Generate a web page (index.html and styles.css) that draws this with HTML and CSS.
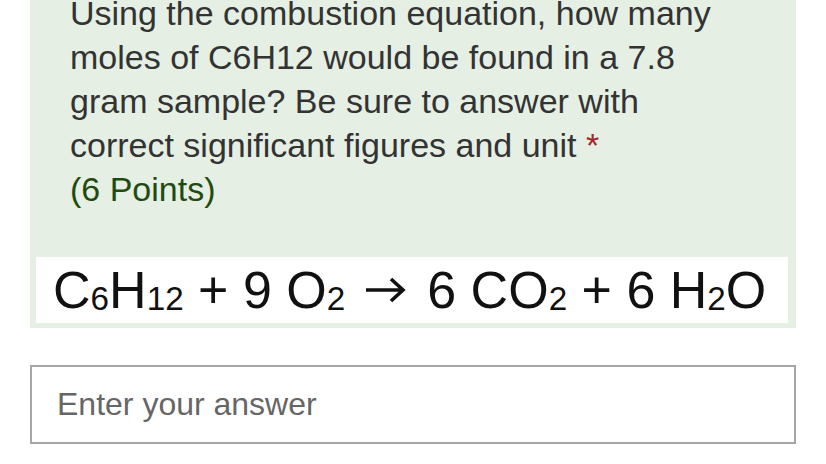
FILE: index.html
```html
<!DOCTYPE html>
<html>
<head>
<meta charset="utf-8">
<link rel="stylesheet" href="styles.css">
</head>
<body>
<div class="page">
  <section class="question">
    <div class="title">Using the combustion equation, how many moles of C6H12 would be found in a 7.8 gram sample? Be sure to answer with correct significant figures and unit <span class="req">*</span></div>
    <div class="points">(6 Points)</div>
    <div class="equation">
      <span>C<sub>6</sub>H<sub>12</sub> + 9 O<sub>2</sub></span>
      <svg class="arrow" width="42" height="26" viewBox="0 0 42 26"><path d="M1 13 H38 M26 2 L38 13 L26 24" fill="none" stroke="#111" stroke-width="3.6"/></svg>
      <span>6 CO<sub>2</sub> + 6 H<sub>2</sub>O</span>
    </div>
  </section>
  <div class="answer">Enter your answer</div>
</div>
</body>
</html>
```
FILE: styles.css
```css
html, body {
  margin: 0;
  padding: 0;
  background: #ffffff;
}
.page {
  padding: 0 30px;
  font-family: "Liberation Sans", Arial, sans-serif;
}
.question {
  background: #e5efe4;
  padding: 0 8px 5px 6px;
}
.title {
  margin-top: -9px;
  padding-left: 34px;
  font-size: 34px;
  line-height: 44px;
  color: #333333;
  width: 645px;
}
.req {
  color: #a4262c;
}
.points {
  padding-left: 34px;
  font-size: 34px;
  line-height: 44px;
  color: #1f4b10;
}
.equation {
  margin-top: 46px;
  height: 66px;
  background: #ffffff;
  display: flex;
  align-items: center;
  gap: 20px;
  padding-left: 17px;
  font-size: 52px;
  color: #111111;
}
.equation sub {
  font-size: 0.64em;
  vertical-align: -0.07em;
  line-height: 0;
}
.arrow {
  flex: none;
}
.answer {
  margin-top: 37px;
  border: 2px solid #a6a6a6;
  box-sizing: border-box;
  height: 79px;
  padding-left: 25px;
  display: flex;
  align-items: center;
  font-size: 32px;
  color: #666666;
}
```
